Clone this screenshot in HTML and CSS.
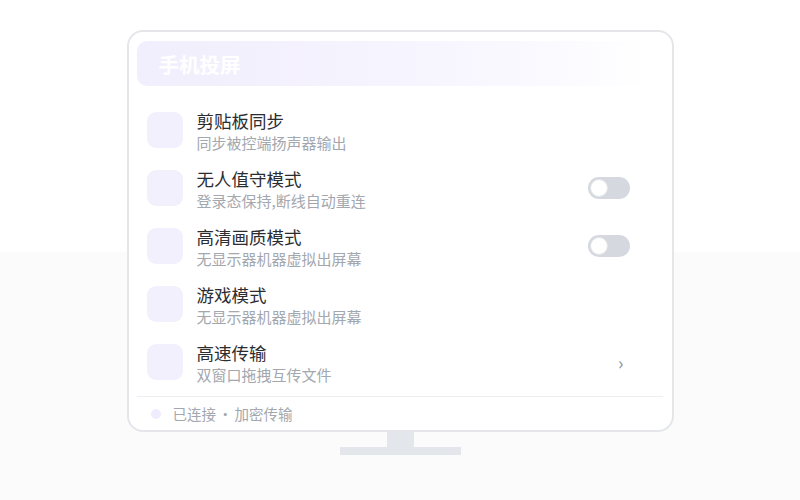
FILE: index.html
```html
<!DOCTYPE html>
<html lang="zh">
<head>
<meta charset="utf-8">
<link rel="stylesheet" href="styles.css">
</head>
<body>
<div class="stage">
  <div class="monitor">
    <div class="header"><span class="header-title">手机投屏</span></div>
    <div class="list">
      <div class="row">
        <div class="icon"></div>
        <div class="texts"><div class="title">剪贴板同步</div><div class="sub">同步被控端扬声器输出</div></div>
      </div>
      <div class="row">
        <div class="icon"></div>
        <div class="texts"><div class="title">无人值守模式</div><div class="sub">登录态保持,断线自动重连</div></div>
        <div class="toggle"><div class="knob"></div></div>
      </div>
      <div class="row">
        <div class="icon"></div>
        <div class="texts"><div class="title">高清画质模式</div><div class="sub">无显示器机器虚拟出屏幕</div></div>
        <div class="toggle"><div class="knob"></div></div>
      </div>
      <div class="row">
        <div class="icon"></div>
        <div class="texts"><div class="title">游戏模式</div><div class="sub">无显示器机器虚拟出屏幕</div></div>
      </div>
      <div class="row">
        <div class="icon"></div>
        <div class="texts"><div class="title">高速传输</div><div class="sub">双窗口拖拽互传文件</div></div>
        <div class="chev">›</div>
      </div>
    </div>
    <div class="footer"><span class="dot"></span><span class="status">已连接<span class="sep">·</span>加密传输</span></div>
  </div>
  <div class="neck"></div>
  <div class="base"></div>
</div>
</body>
</html>
```
FILE: styles.css
```css
* { box-sizing: border-box; }
html, body { margin: 0; height: 100%; }
body {
  background: linear-gradient(180deg, #ffffff 0, #ffffff 252px, #fbfbfc 252px, #fbfbfc 100%);
  font-family: "Noto Sans CJK SC", "Noto Sans", sans-serif;
}
.stage {
  display: flex;
  flex-direction: column;
  align-items: center;
  padding-top: 30px;
}
.monitor {
  width: 547px;
  height: 402px;
  border: 2px solid #e4e6ea;
  border-radius: 16px;
  background: #ffffff;
  padding: 9px 9px 0 8px;
  display: flex;
  flex-direction: column;
}
.header {
  height: 45px;
  border-radius: 10px;
  background: linear-gradient(90deg, #f1eefd 0%, #f6f4fe 50%, #fbfaff 80%, rgba(255,255,255,0) 98%);
  display: flex;
  align-items: center;
  padding-left: 22px;
}
.header-title {
  color: #ffffff;
  font-size: 20.5px;
  font-weight: 700;
}
.list {
  margin-top: 15px;
  display: flex;
  flex-direction: column;
}
.row {
  height: 58px;
  display: flex;
  align-items: center;
  padding: 0 33px 0 10px;
}
.icon {
  width: 36px;
  height: 36px;
  border-radius: 9px;
  background: #f3f0fe;
  flex: none;
}
.texts {
  margin-left: 14px;
  flex: 1;
  display: flex;
  flex-direction: column;
  padding-top: 2px;
}
.title {
  font-size: 17.5px;
  line-height: 22px;
  color: #2b2d31;
}
.sub {
  font-size: 15px;
  line-height: 21px;
  color: #a3a7ae;
}
.toggle {
  width: 42px;
  height: 22px;
  border-radius: 11px;
  background: #d5d8de;
  padding: 2px;
  display: flex;
}
.knob {
  width: 18px;
  height: 18px;
  border-radius: 50%;
  background: #ffffff;
  border: 1px solid #e2e4e8;
}
.chev {
  font-size: 18px;
  color: #8a8f98;
  margin-right: 6px;
  line-height: 20px;
}
.footer {
  margin-top: 5px;
  border-top: 1px solid #eceef1;
  flex: 1;
  display: flex;
  align-items: center;
  padding-left: 14px;
}
.dot {
  width: 10px;
  height: 10px;
  border-radius: 50%;
  background: #efecfd;
}
.status {
  margin-left: 12px;
  font-size: 14.5px;
  color: #a3a7ae;
}
.sep {
  margin: 0 2px;
}
.neck {
  width: 27px;
  height: 15px;
  background: #e3e6ea;
}
.base {
  width: 121px;
  height: 8px;
  background: #e3e6ea;
}
```
